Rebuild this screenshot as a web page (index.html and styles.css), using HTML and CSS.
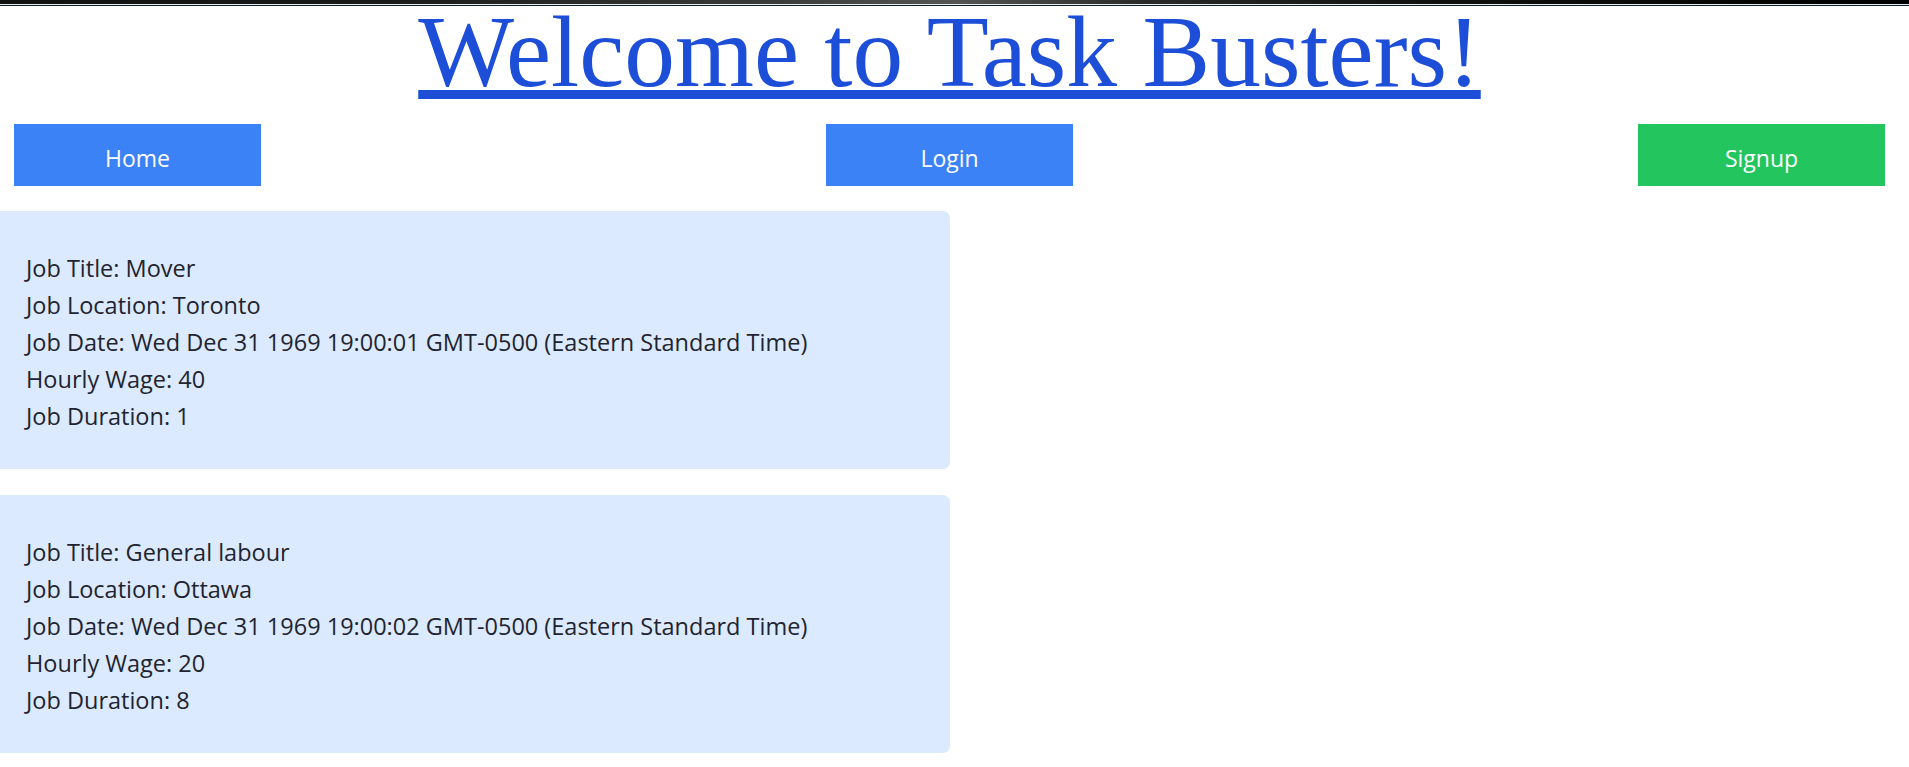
FILE: index.html
```html
<!DOCTYPE html>
<html lang="en">
<head>
<meta charset="utf-8">
<title>Task Busters</title>
<link rel="stylesheet" href="styles.css">
</head>
<body>
<div class="topbar"></div>
<div class="page">
  <header class="header">
    <h1 class="title"><a href="#" class="title-link">Welcome to Task Busters!</a></h1>
  </header>
  <nav class="nav">
    <a href="#" class="btn btn-blue">Home</a>
    <a href="#" class="btn btn-blue">Login</a>
    <a href="#" class="btn btn-green">Signup</a>
  </nav>
  <main class="jobs">
    <section class="card">
      <p class="line">Job Title: Mover</p>
      <p class="line">Job Location: Toronto</p>
      <p class="line">Job Date: Wed Dec 31 1969 19:00:01 GMT-0500 (Eastern Standard Time)</p>
      <p class="line">Hourly Wage: 40</p>
      <p class="line">Job Duration: 1</p>
    </section>
    <section class="card">
      <p class="line">Job Title: General labour</p>
      <p class="line">Job Location: Ottawa</p>
      <p class="line">Job Date: Wed Dec 31 1969 19:00:02 GMT-0500 (Eastern Standard Time)</p>
      <p class="line">Hourly Wage: 20</p>
      <p class="line">Job Duration: 8</p>
    </section>
  </main>
</div>
</body>
</html>
```

FILE: styles.css
```css
html, body {
  margin: 0;
  padding: 0;
  background: #ffffff;
}

body {
  font-family: "Open Sans", "Noto Sans", sans-serif;
  color: #1f2430;
  overflow: hidden;
}

.topbar {
  height: 6px;
  background:
    linear-gradient(to bottom, transparent 0, transparent 4px, #e8eef2 4px, #e8eef2 5px, #0c1e2c 5px, #0c1e2c 6px),
    linear-gradient(to right, #111 0%, #1a1a1a 20%, #3a3a3a 40%, #555 50%, #2a2a2a 60%, #111 75%, #000 100%);
}

.page {
  width: 1899px;
}

.header {
  display: flex;
  justify-content: center;
  padding-top: 1px;
}

.title {
  margin: 0;
  font-family: "Liberation Serif", "Times New Roman", serif;
  font-weight: 400;
  font-size: 101.5px;
  line-height: 91px;
}

.title-link {
  color: #1d4ed8;
  text-decoration: underline;
  text-decoration-thickness: 9px;
  text-underline-offset: 4px;
}

.nav {
  display: flex;
  justify-content: space-between;
  padding: 0 14px;
  margin-top: 26px;
}

.btn {
  display: flex;
  align-items: center;
  justify-content: center;
  box-sizing: border-box;
  width: 247px;
  height: 62px;
  padding-top: 5px;
  color: #ffffff;
  text-decoration: none;
  font-size: 23px;
}

.btn-blue {
  background: #3b82f6;
}

.btn-green {
  background: #22c55e;
}

.jobs {
  display: flex;
  flex-direction: column;
  gap: 26px;
  margin-top: 25px;
}

.card {
  width: 950px;
  box-sizing: border-box;
  background: #dbeafe;
  border-radius: 0 7px 7px 0;
  padding: 39px 26px 34px;
}

.line {
  margin: 0;
  font-size: 23.5px;
  line-height: 37px;
  white-space: nowrap;
}
```
